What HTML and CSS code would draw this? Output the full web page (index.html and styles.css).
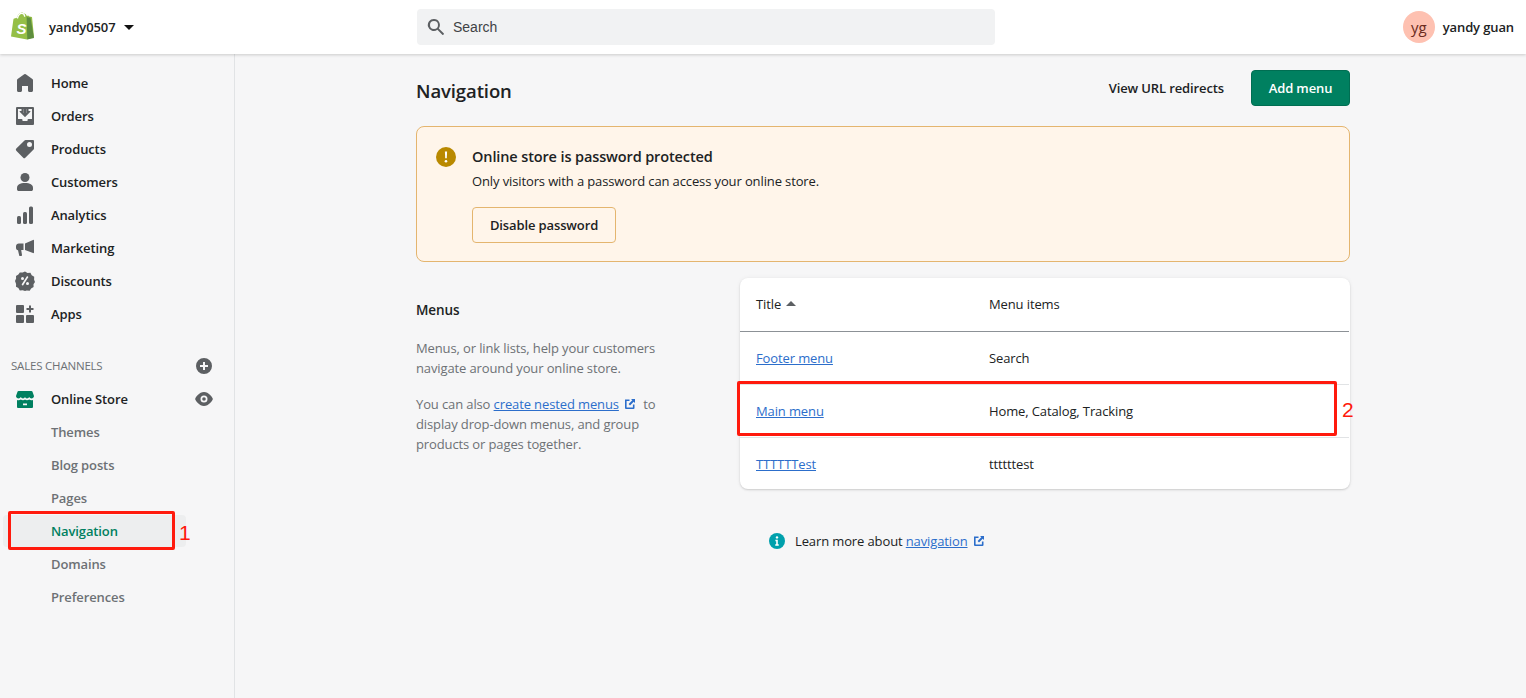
FILE: index.html
```html
<!DOCTYPE html>
<html lang="en">
<head>
<meta charset="utf-8">
<title>Navigation</title>
<link rel="stylesheet" href="styles.css">
</head>
<body>
<header class="topbar">
  <div class="shop">
    <svg class="logo" viewBox="0 0 24 28"><path fill="#95bf47" d="M1 24.5 3.4 7.6c.1-.6.3-.8.9-1l2.600-.8C7.800 3 9.500.6 12 .6c.8 0 1.300.3 1.800.8 1.500-.2 2.500 1 3 2.500l1.400-.4 1.100 1.100 2.700.3L24 25l-7 2.400z"/><path fill="#5e8e3e" d="m17.300 27.400 6.700-1.500-3.500-20.300-2.700-.2-1.200-1.300z"/><path fill="none" stroke="#fff" stroke-width="1.300" d="M7.400 6.500C8 3.500 9.800 1.300 12 1.300c1.800 0 2.600 1.600 2.700 3.400"/><text class="logo-s" x="6.500" y="21.500">S</text></svg>
    <span class="shop-name">yandy0507</span>
    <span class="caret"></span>
  </div>
  <div class="search">
    <svg class="search-icon" viewBox="0 0 20 20"><path fill="#5c5f62" d="M8 12a4 4 0 1 1 0-8 4 4 0 0 1 0 8zm9.700 4.300-4.900-4.900A6 6 0 0 0 8 2a6 6 0 1 0 3.400 10.800l4.900 4.900a1 1 0 0 0 1.400-1.400z"/></svg>
    <span>Search</span>
  </div>
  <div class="user">
    <span class="avatar">yg</span>
    <span class="user-name">yandy guan</span>
  </div>
</header>

<div class="frame">
  <nav class="sidebar">
    <ul class="nav">
      <li class="nav-item"><svg class="nav-icon" viewBox="0 0 20 20"><path d="M18 7.261V17.500c0 .841-.672 1.500-1.500 1.500h-2c-.828 0-1.500-.659-1.500-1.500V13H7v4.477C7 18.318 6.328 19 5.500 19h-2c-.828 0-1.500-.682-1.500-1.523V7.261a1.500 1.500 0 0 1 .615-1.210l6.590-4.820a1.481 1.481 0 0 1 1.590 0l6.590 4.820A1.500 1.500 0 0 1 18 7.260z"/></svg>Home</li>
      <li class="nav-item"><svg class="nav-icon" viewBox="0 0 20 20"><path fill-rule="evenodd" d="M2 1h16a1 1 0 0 1 1 1v16a1 1 0 0 1-1 1H2a1 1 0 0 1-1-1V2a1 1 0 0 1 1-1zm1 2v10h3.500a1 1 0 0 1 1 1v1h5v-1a1 1 0 0 1 1-1H17V3h-3.500v2H15a.5.5 0 0 1 .35.85l-5 5a.5.5 0 0 1-.7 0l-5-5A.5.5 0 0 1 5 5h1.500V3zm5.500 0v4H7.400L10 9.600 12.600 7h-1.100V3z"/><path d="M8.500 2.500h3V7h1.800L10 10.500 6.700 7h1.800z"/></svg>Orders</li>
      <li class="nav-item"><svg class="nav-icon" viewBox="0 0 20 20"><path d="M18 1h-7.500a1.500 1.500 0 0 0-1 .4L1.300 9.600a1.500 1.500 0 0 0 0 2.100l6.900 7a1.500 1.500 0 0 0 2.100 0l8.300-8.200c.300-.3.400-.7.400-1.100V2a1 1 0 0 0-1-1zm-3.500 7a2.500 2.500 0 1 1 0-5 2.500 2.500 0 0 1 0 5z"/></svg>Products</li>
      <li class="nav-item"><svg class="nav-icon" viewBox="0 0 20 20"><circle cx="10" cy="5.500" r="4.500"/><path d="M2 16c0-3.300 3-5 8-5s8 1.700 8 5v1.200c0 1-.8 1.800-1.800 1.800H3.800C2.800 19 2 18.200 2 17.200z"/></svg>Customers</li>
      <li class="nav-item"><svg class="nav-icon" viewBox="0 0 20 20"><rect x="2" y="11" width="4" height="8" rx="1.500"/><rect x="8" y="7" width="4" height="12" rx="1.500"/><rect x="14" y="1.500" width="4" height="17.500" rx="1.500"/></svg>Analytics</li>
      <li class="nav-item"><svg class="nav-icon" viewBox="0 0 20 20"><path d="M19 2.500v12c0 .5-.5.8-1 .6L10 12V5.500L18 1.900c.5-.2 1 .1 1 .6zM8.500 5.500V12H6.200l.8 5.100c.1.500-.3.900-.8.900H5c-.4 0-.7-.2-.8-.6L3 12.300C1.800 12 1 11 1 9.700V8.300c0-1.500 1.300-2.800 2.800-2.800z"/></svg>Marketing</li>
      <li class="nav-item"><svg class="nav-icon" viewBox="0 0 20 20"><path fill-rule="evenodd" d="m10 .5 2.500 1.400 2.900-.1 1.300 2.500 2.500 1.500-.1 2.900L20 11l-1.500 2.200.1 2.900-2.500 1.300-1.400 2.300-2.900-.1L10 20l-2.300-.7-2.900.1-1.400-2.300-2.400-1.400.1-2.800L0 10l1.100-2.400L1 4.900l2.400-1.300 1.400-2.200 2.900.2zM7.500 6A1.500 1.500 0 1 0 7.500 9 1.500 1.500 0 0 0 7.500 6zm5 5a1.500 1.500 0 1 0 0 3 1.500 1.500 0 0 0 0-3zm.9-4.900-1.300-1.200-5.500 8.700 1.300 1.200z"/></svg>Discounts</li>
      <li class="nav-item"><svg class="nav-icon" viewBox="0 0 20 20"><rect x="1" y="1" width="8" height="8" rx="1"/><rect x="1" y="11" width="8" height="8" rx="1"/><rect x="11" y="11" width="8" height="8" rx="1"/><path d="M14 1.500h2V4h2.500v2H16v2.500h-2V6h-2.500V4H14z"/></svg>Apps</li>
    </ul>
    <div class="section-head">
      <span>SALES CHANNELS</span>
      <svg class="side-action" viewBox="0 0 20 20"><path fill-rule="evenodd" d="M10 2a8 8 0 1 1 0 16 8 8 0 0 1 0-16zM9 6v3H6v2h3v3h2v-3h3V9h-3V6z"/></svg>
    </div>
    <ul class="nav">
      <li class="nav-item store"><svg class="nav-icon green" viewBox="0 0 20 20"><path d="M3.500 2h13a1 1 0 0 1 .9.6L19 7c0 1.500-1.300 2.500-2.500 2.500-1 0-2-.6-2.300-1.400-.4.800-1.200 1.400-2.200 1.400S10.300 9 10 8.100C9.700 9 8.900 9.500 8 9.500s-1.800-.6-2.200-1.400c-.3.800-1.300 1.400-2.300 1.400C2.300 9.500 1 8.500 1 7l1.600-4.400a1 1 0 0 1 .9-.6z"/><path d="M2 11c.5.100 1 .2 1.500.2 1 0 1.800-.3 2.300-.7.600.4 1.300.7 2.200.7s1.500-.3 2-.7c.5.400 1.200.7 2 .7s1.600-.3 2.200-.7c.5.400 1.400.7 2.300.7.500 0 1-.1 1.500-.2v7a1 1 0 0 1-1 1H3a1 1 0 0 1-1-1zm6 3.500v1.800h4v-1.800z"/></svg><span class="store-name">Online Store</span><svg class="side-action" viewBox="0 0 20 20"><path fill-rule="evenodd" d="M10 3c4.800 0 8 5 8.700 6.500a1 1 0 0 1 0 1C18 12 14.800 17 10 17s-8-5-8.700-6.500a1 1 0 0 1 0-1C2 8 5.200 3 10 3zm0 3.500a3.500 3.500 0 1 0 0 7 3.500 3.500 0 0 0 0-7zm0 1.700a1.800 1.800 0 1 1 0 3.600 1.800 1.800 0 0 1 0-3.600z"/></svg></li>
      <li class="nav-item sub">Themes</li>
      <li class="nav-item sub">Blog posts</li>
      <li class="nav-item sub">Pages</li>
      <li class="nav-item sub active"><span>Navigation</span></li>
      <li class="nav-item sub">Domains</li>
      <li class="nav-item sub">Preferences</li>
    </ul>
  </nav>

  <main class="main">
    <div class="page">
      <div class="page-head">
        <h1 class="page-title">Navigation</h1>
        <div class="page-actions">
          <span class="plain-action">View URL redirects</span>
          <button class="primary">Add menu</button>
        </div>
      </div>

      <section class="banner">
        <svg class="banner-icon" viewBox="0 0 20 20"><path fill="#b98900" d="M10 0a10 10 0 1 1 0 20 10 10 0 0 1 0-20z"/><path fill="#fff" d="M8.900 4.500h2.200l-.3 6.800H9.200z"/><circle fill="#fff" cx="10" cy="14.300" r="1.300"/></svg>
        <div class="banner-body">
          <h2 class="banner-title">Online store is password protected</h2>
          <p class="banner-text">Only visitors with a password can access your online store.</p>
          <button class="outline">Disable password</button>
        </div>
      </section>

      <section class="layout">
        <div class="annotation">
          <h2 class="annotation-title">Menus</h2>
          <p class="muted">Menus, or link lists, help your customers navigate around your online store.</p>
          <p class="muted">You can also <a class="link">create nested menus</a><svg class="ext" viewBox="0 0 12 12"><path d="M1 1.500h4.500v1.600H2.600v6.300h6.300V6.500h1.600V10a1 1 0 0 1-1 1H2a1 1 0 0 1-1-1z"/><path d="M7 1h4v4L9.700 3.700 6 7.400 4.600 6l3.700-3.700z"/></svg> to display drop-down menus, and group products or pages together.</p>
        </div>
        <div class="card">
          <table class="table">
            <thead>
              <tr><th class="col-title">Title<span class="sort"></span></th><th>Menu items</th></tr>
            </thead>
            <tbody>
              <tr><td><a class="link">Footer menu</a></td><td>Search</td></tr>
              <tr><td><a class="link">Main menu</a></td><td>Home, Catalog, Tracking</td></tr>
              <tr><td><a class="link">TTTTTTest</a></td><td>ttttttest</td></tr>
            </tbody>
          </table>
        </div>
      </section>

      <div class="footer-help">
        <svg class="info" viewBox="0 0 20 20"><path fill="#00a0ac" d="M10 0a10 10 0 1 1 0 20 10 10 0 0 1 0-20z"/><circle fill="#fff" cx="10" cy="5.500" r="1.500"/><path fill="#fff" d="M8 8.500h3V14h1.200v1.800H7.800V14H9v-3.700H8z"/></svg>
        <span>Learn more about <a class="link">navigation</a></span>
        <svg class="ext" viewBox="0 0 12 12"><path d="M1 1.500h4.500v1.600H2.600v6.300h6.300V6.500h1.600V10a1 1 0 0 1-1 1H2a1 1 0 0 1-1-1z"/><path d="M7 1h4v4L9.700 3.700 6 7.400 4.600 6l3.700-3.700z"/></svg>
      </div>
    </div>
  </main>
</div>

<div class="mark mark-nav"></div>
<span class="mark-num num-nav">1</span>
<div class="mark mark-main"></div>
<span class="mark-num num-main">2</span>
</body>
</html>
```

FILE: styles.css
```css
* { box-sizing: border-box; }
html, body { height: 100%; }
body {
  margin: 0;
  display: flex;
  flex-direction: column;
  height: 698px;
  overflow: hidden;
  position: relative;
  background: #f6f6f7;
  color: #202223;
  font-family: "Open Sans", "Liberation Sans", sans-serif;
  font-size: 13px;
  line-height: 20px;
  letter-spacing: -0.12px;
}
h1, h2, p, ul { margin: 0; padding: 0; }
ul { list-style: none; }

/* top bar */
.topbar {
  flex: 0 0 54px;
  display: grid;
  grid-template-columns: 417px 578px 1fr;
  align-items: center;
  background: #fff;
  box-shadow: 0 1px 3px rgba(0, 0, 0, .18);
  position: relative;
  z-index: 2;
}
.shop { display: flex; align-items: center; padding-left: 10px; }
.logo { width: 24px; height: 28px; margin-top: -2px; }
.logo-s { fill: #fff; font: italic 700 15px "Liberation Sans", sans-serif; }
.shop-name { margin-left: 15px; font-weight: 600; color: #202223; }
.caret {
  margin-left: 9px;
  width: 0; height: 0;
  border-left: 5px solid transparent;
  border-right: 5px solid transparent;
  border-top: 5px solid #111;
}
.search {
  height: 36px;
  display: flex;
  align-items: center;
  padding-left: 9px;
  background: #f1f2f3;
  border-radius: 4px;
  color: #3f4245;
  font-family: "Liberation Sans", sans-serif;
  font-size: 14px;
  letter-spacing: 0;
}
.search-icon { width: 20px; height: 20px; margin-right: 7px; }
.user { display: flex; align-items: center; justify-content: flex-end; padding-right: 12px; }
.avatar {
  width: 32px; height: 32px;
  border-radius: 50%;
  background: #fec1b1;
  color: #6b2b20;
  display: flex; align-items: center; justify-content: center;
  font-size: 15px;
}
.user-name { margin-left: 8px; font-weight: 600; }

/* frame */
.frame { flex: 1; display: flex; min-height: 0; }
.sidebar {
  flex: 0 0 235px;
  border-right: 1px solid #e1e3e5;
  padding-top: 12px;
}
.nav-item {
  height: 33px;
  display: flex;
  align-items: center;
  padding-left: 15px;
  font-weight: 600;
  color: #202223;
}
.nav-icon { width: 20px; height: 20px; margin-right: 16px; fill: #5c5f62; flex: none; }
.nav-icon.green { fill: #008060; }
.store-name { flex: 1; }
.side-action { width: 20px; height: 20px; fill: #5c5f62; margin-right: 20px; flex: none; }
.section-head {
  height: 20px;
  margin-top: 26px;
  margin-bottom: 6px;
  display: flex;
  align-items: center;
  justify-content: space-between;
  padding-left: 11px;
  font-size: 11.500px;
  font-weight: 400;
  color: #6d7175;
  letter-spacing: -0.2px;
}
.sub { padding-left: 51px; color: #6d7175; }
.active {
  padding-left: 0;
}
.active span {
  margin-left: 3px;
  width: 183px;
  height: 32px;
  padding-left: 48px;
  display: flex;
  align-items: center;
  background: #edeeef;
  border-radius: 4px;
  color: #008060;
}

/* page */
.main { flex: 1; min-width: 0; }
.page { width: 934px; margin-left: 181px; padding-top: 16px; }
.page-head { display: flex; justify-content: space-between; align-items: center; height: 36px; }
.page-title { font-size: 18.500px; font-weight: 600; line-height: 28px; margin-top: 5px; letter-spacing: -0.1px; }
.page-actions { display: flex; align-items: center; }
.plain-action { font-weight: 600; margin-right: 27px; color: #202223; }
button {
  font: inherit;
  letter-spacing: inherit;
  font-weight: 600;
  border-radius: 4px;
  cursor: pointer;
}
.primary {
  width: 99px; height: 36px;
  background: #008060;
  border: 1px solid #006e52;
  color: #fff;
}

.banner {
  margin-top: 20px;
  height: 136px;
  display: flex;
  padding: 20px 19px;
  background: #fff5ea;
  border: 1px solid #e4b56f;
  border-radius: 8px;
}
.banner-icon { width: 20px; height: 20px; flex: none; margin-right: 16px; }
.banner-title { font-size: 14.500px; font-weight: 600; line-height: 20px; }
.banner-text { margin-top: 4px; }
.outline {
  margin-top: 16px;
  width: 144px; height: 36px;
  background: transparent;
  border: 1px solid #e4b56f;
  color: #202223;
  display: block;
}

.layout { margin-top: 16px; display: grid; grid-template-columns: 324px 610px; }
.annotation { padding-top: 22px; width: 264px; }
.annotation-title { font-size: 13.500px; font-weight: 600; line-height: 20px; }
.muted { color: #6d7175; margin-top: 18px; }
.muted + .muted { margin-top: 16px; }
.link { color: #2c6ecb; text-decoration: underline; }
.ext { width: 12px; height: 12px; fill: #2c6ecb; margin-left: 5px; margin-right: 4px; vertical-align: -1px; }

.card {
  height: 211px;
  background: #fff;
  border-radius: 8px;
  box-shadow: 0 0 5px rgba(23, 24, 24, .05), 0 1px 2px rgba(0, 0, 0, .15);
  overflow: hidden;
  padding-right: 1px;
}
.table { width: 100%; border-collapse: collapse; table-layout: fixed; }
.table th, .table td { text-align: left; padding: 0 16px; font-weight: 400; }
.table th { height: 53px; border-bottom: 1px solid #8c9196; }
.table td { height: 53px; border-bottom: 1px solid #e1e3e5; }
.table tr:last-child td { border-bottom: 0; }
.col-title { width: 233px; }
.sort {
  display: inline-block;
  margin-left: 5px;
  vertical-align: 3px;
  width: 0; height: 0;
  border-left: 5px solid transparent;
  border-right: 5px solid transparent;
  border-bottom: 5px solid #5c5f62;
}

.footer-help {
  margin-top: 42px;
  margin-left: 353px;
  display: flex;
  align-items: center;
}
.info { width: 16px; height: 16px; margin-right: 10px; flex: none; }
.footer-help .ext { margin-left: 5px; }

/* red annotations drawn on top of the screenshot */
.mark {
  position: absolute;
  border: 3px solid #ff1a0d;
  border-radius: 2px;
  z-index: 3;
}
.mark-nav { left: 8px; top: 511px; width: 167px; height: 39px; }
.mark-main { left: 737px; top: 381px; width: 600px; height: 55px; }
.mark-num {
  position: absolute;
  z-index: 3;
  color: #ff1a0d;
  font-family: "Liberation Sans", sans-serif;
  font-size: 21px;
  line-height: 24px;
  letter-spacing: 0;
}
.num-nav { left: 179px; top: 521px; }
.num-main { left: 1342px; top: 398px; }
```
